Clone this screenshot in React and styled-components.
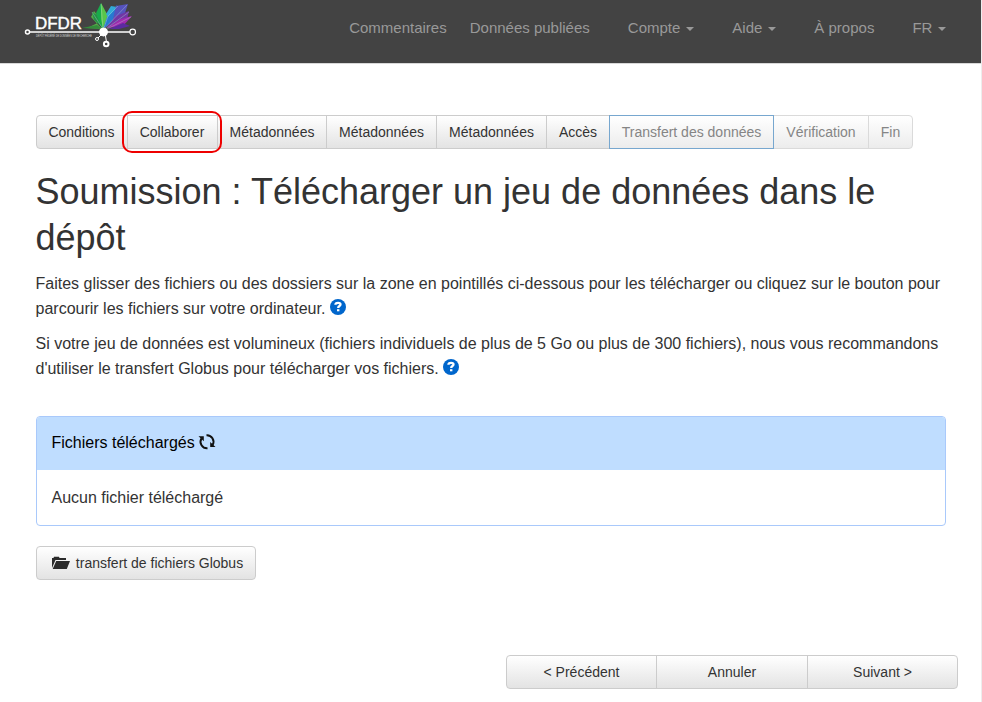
import React from 'react';
import styled, { createGlobalStyle } from 'styled-components';

const Global = createGlobalStyle`
  *, *::before, *::after { box-sizing: border-box; }
  html, body { margin: 0; background: #fff; }
  body { font: 16px/25px "Liberation Sans", Arial, sans-serif; color: #333; }
`;
const Page = styled.div`
  height: 702px;
  overflow: hidden;
  border-right: 1px solid #ededed;
`;
const Header = styled.header`
  height: 64px;
  background: #434343;
  border-bottom: 1px solid #d8d8d8;
  display: flex;
  justify-content: space-between;
`;
const Logo = styled.svg`
  display: block;
  margin-left: 20px;
`;
const Nav = styled.nav`
  display: flex;
  padding: 15px 34.6px 0 0;
  gap: 38px;
  color: #999;
  font-size: 15px;
`;
const NavItem = styled.a`
  display: flex;
  align-items: center;
  height: 25px;
  white-space: nowrap;
  margin-left: ${p => p.$pull || 0}px;
`;
const Caret = styled.span`
  margin: 2px 0 0 6px;
  border: 4px solid transparent;
  border-top-color: #999;
  border-bottom: 0;
`;
const Main = styled.main`
  padding: 51px 23px 0 36px;
`;
const Group = styled.div`
  display: flex;
  height: 34px;
`;
const Button = styled.button`
  width: ${p => p.$w}px;
  height: 34px;
  flex: none;
  display: flex;
  align-items: center;
  justify-content: center;
  padding: 0 ${p => p.$trim || 0}px 0 0;
  font: 14px/20px "Liberation Sans", Arial, sans-serif;
  white-space: nowrap;
  color: ${p => (p.$muted ? '#858585' : '#333')};
  background: linear-gradient(#fff, ${p => (p.$muted ? '#ececec' : '#e3e3e3')});
  border: 1px solid ${p => (p.$active ? '#77a7cf' : p.$muted ? '#dadada' : '#ccc')};
  position: relative;
  z-index: ${p => (p.$marked ? 2 : p.$active ? 1 : 0)};
  & + & { margin-left: -1px; }
  &:first-of-type { border-radius: 4px 0 0 4px; }
  &:last-of-type { border-radius: 0 4px 4px 0; }
  &:only-of-type { border-radius: 4px; }
`;
const Highlight = styled.span`
  position: absolute;
  left: -6px;
  top: -5px;
  width: 100px;
  height: 42px;
  border: 2px solid #ee0000;
  border-radius: 10px;
`;
const Title = styled.h1`
  margin: 20px 0 0 -0.5px;
  font-size: 36px;
  line-height: 46px;
  font-weight: 400;
  white-space: nowrap;
`;
const Text = styled.p`
  margin: ${p => p.$top}px 0 0 -0.5px;
  white-space: nowrap;
`;
const HelpIcon = styled.svg`
  vertical-align: -1px;
  margin: -1px 0 0 0;
`;
const Panel = styled.section`
  width: 910px;
  height: 110px;
  margin: 35px 0 20px;
  border: 1px solid #a9c9fb;
  border-radius: 4px;
  overflow: hidden;
`;
const PanelHead = styled.div`
  height: 53px;
  padding: 13px 14.5px;
  background: #bfddff;
  color: #000;
  display: flex;
  gap: 3px;
`;
const PanelBody = styled.div`
  padding: 15px 14.5px;
`;
const FolderIcon = styled.svg`
  margin: 0 6px 0 3px;
`;
const Footer = styled(Group)`
  margin-top: 75px;
  justify-content: flex-end;
`;

const Help = () => (
  <HelpIcon width="16" height="16" viewBox="0 0 16 16">
    <circle cx="8" cy="8" r="8" fill="#0066cc" />
    <path d="M5.4 5.8C5.4 4.4 6.6 3.9 8.1 3.9c1.5 0 2.4.7 2.4 1.7 0 1.5-2.3 1.4-2.3 3.3" fill="none" stroke="#fff" strokeWidth="2.3" />
    <path d="M7 10.2h2.4v2.1H7z" fill="#fff" />
  </HelpIcon>
);

const Brand = () => (
  <Logo width="120" height="50" viewBox="20 0 120 50">
    <path d="M87 28l15 1-11-12 3-6 8 10z" fill="#55ad47" />
    <path d="M92 12l5 3 7 14-10-9z" fill="#258f48" />
    <path d="M101 3l-5 10 6 16 6-11z" fill="#18ab4c" />
    <path d="M101 3l7 13-5 13-2-10z" fill="#59c64a" />
    <path d="M107 17l10-12 1 12-15 12z" fill="#2879d0" />
    <path d="M106 14l5-8 6 1-9 10z" fill="#31abd8" />
    <path d="M116 6l12-2-4 12-13 11z" fill="#5552bd" />
    <path d="M106 28l10-12 13-5-2 9z" fill="#7136a5" />
    <path d="M107 28l14-9 11-3-9 10z" fill="#a129af" />
    <path d="M109 29l14-6 7 3-11 3z" fill="#5b2ba0" />
    <path d="M82 28l15-3 5 4z" fill="#348b3c" />
    <path d="M103 29L92 12M103 29l-2-25M104 28l4-12 10-10M105 28l22-23M107 28l22-16M107 29l24-12" fill="none" stroke="#bde2dc" strokeWidth=".35" />
    <text x="35" y="28.5" textLength="47" lengthAdjust="spacingAndGlyphs" fontSize="16.5" fill="#fff" stroke="#fff" strokeWidth=".4">DFDR</text>
    <text x="36" y="36.7" textLength="56" lengthAdjust="spacingAndGlyphs" fontSize="3.3" fill="#ddd">DÉPÔT FÉDÉRÉ DE DONNÉES DE RECHERCHE</text>
    <g stroke="#fff" fill="#434343">
      <path d="M30 32h100" strokeWidth="1.5" />
      <path d="M103 33l-5 5M105 33l1.5 9" />
      <circle cx="27.5" cy="32" r="2" strokeWidth="1.5" />
      <circle cx="132.7" cy="32" r="2.8" strokeWidth="1.2" />
      <circle cx="97" cy="39" r="1.5" />
      <circle cx="106.2" cy="44" r="2.3" strokeWidth="2" />
      <circle cx="103.5" cy="32" r="4" fill="#fff" />
    </g>
  </Logo>
);

export default function App() {
  return (
    <Page>
      <Global />
      <Header>
        <Brand />
        <Nav>
          <NavItem>Commentaires</NavItem>
          <NavItem $pull={-15}>Données publiées</NavItem>
          <NavItem>Compte<Caret /></NavItem>
          <NavItem>Aide<Caret /></NavItem>
          <NavItem>À propos</NavItem>
          <NavItem>FR<Caret /></NavItem>
        </Nav>
      </Header>
      <Main>
        <Group>
          <Button $w={92} $trim={1}>Conditions</Button>
          <Button $w={91} $trim={1} $marked>Collaborer<Highlight /></Button>
          <Button $w={110}>Métadonnées</Button>
          <Button $w={111}>Métadonnées</Button>
          <Button $w={111}>Métadonnées</Button>
          <Button $w={64}>Accès</Button>
          <Button $w={165} $muted $active>Transfert des données</Button>
          <Button $w={96} $muted>Vérification</Button>
          <Button $w={45} $muted>Fin</Button>
        </Group>
        <Title>Soumission : Télécharger un jeu de données dans le<br />dépôt</Title>
        <Text $top={10}>
          Faites glisser des fichiers ou des dossiers sur la zone en pointillés ci-dessous pour les télécharger ou cliquez sur le bouton pour<br />
          parcourir les fichiers sur votre ordinateur. <Help />
        </Text>
        <Text $top={10}>
          Si votre jeu de données est volumineux (fichiers individuels de plus de 5 Go ou plus de 300 fichiers), nous vous recommandons<br />
          d'utiliser le transfert Globus pour télécharger vos fichiers. <Help />
        </Text>
        <Panel>
          <PanelHead>
            Fichiers téléchargés
            <svg width="18" height="24" viewBox="0 0 18 24" fill="none" stroke="#111" strokeWidth="2">
              <path d="M9.5 18.2A6.5 6.5 0 0 1 3.4 8.5M8.5 5.2a6.5 6.5 0 0 1 6.1 9.7" />
              <path d="M.5 6.2h5.3v5zM17.5 17h-5.3v-5z" fill="#111" stroke="none" />
            </svg>
          </PanelHead>
          <PanelBody>Aucun fichier téléchargé</PanelBody>
        </Panel>
        <Group>
          <Button $w={220}>
            <FolderIcon width="18" height="14" viewBox="0 0 18 14" fill="#2b2b2b">
              <path d="M0 12V2h1.5L2 .7h5L7.5 2H14v2H3.5zM4.2 5H18l-3.2 8H.7z" />
            </FolderIcon>
            transfert de fichiers Globus
          </Button>
        </Group>
        <Footer>
          <Button $w={151}>&lt; Précédent</Button>
          <Button $w={152}>Annuler</Button>
          <Button $w={151}>Suivant &gt;</Button>
        </Footer>
      </Main>
    </Page>
  );
}
